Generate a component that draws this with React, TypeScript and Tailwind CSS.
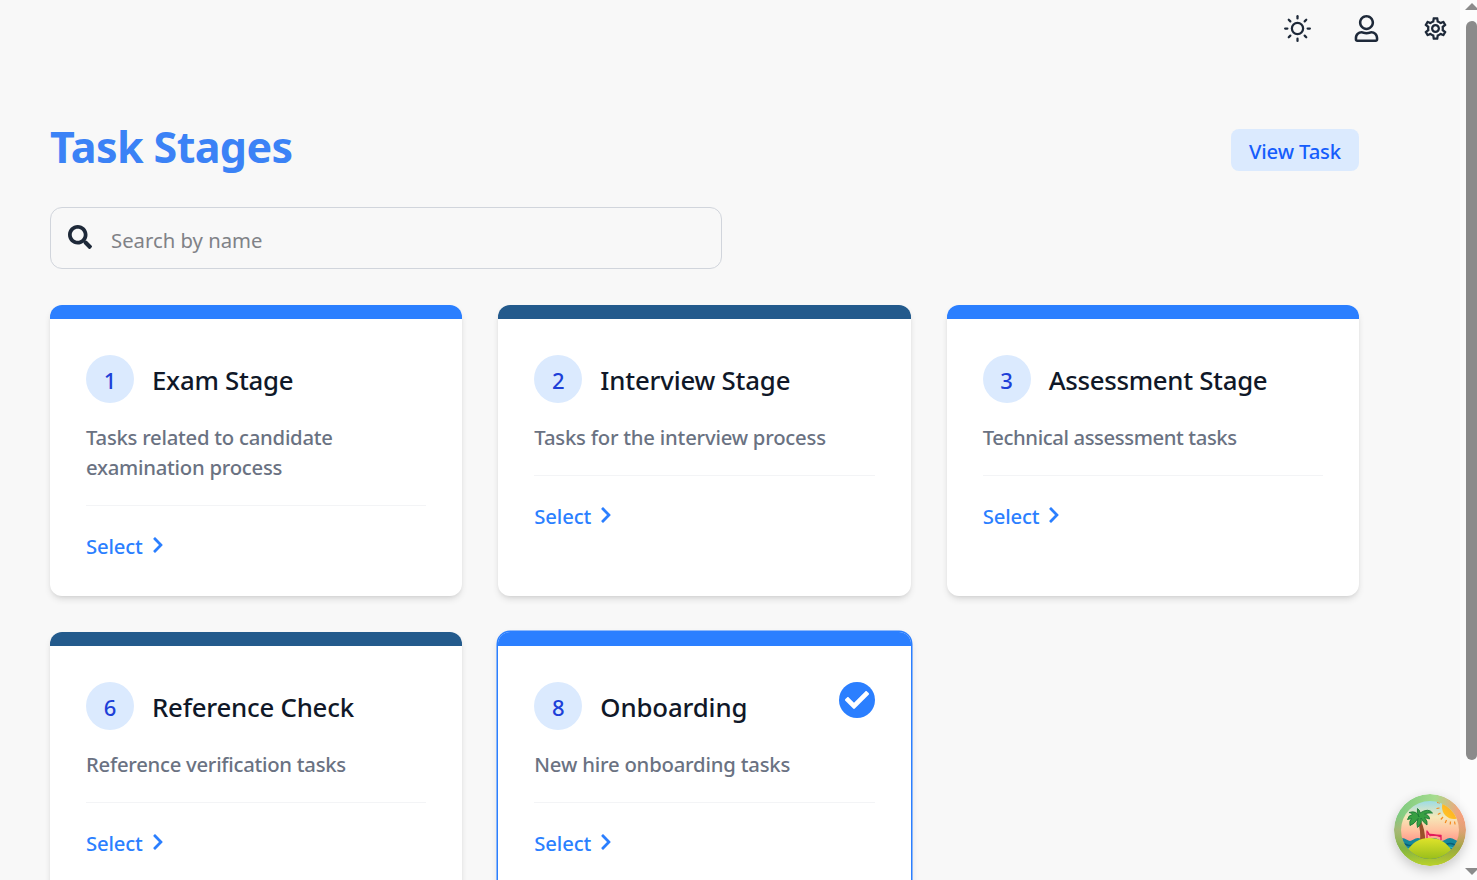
import React from "react";
import { FaRegUser, FaSearch, FaChevronRight, FaCheck } from "react-icons/fa";
import { FiSun } from "react-icons/fi";
import { MdOutlineSettings } from "react-icons/md";

type Stage = {
  id: number;
  title: string;
  titleClass: string;
  description: string;
  descClass: string;
  bar: string;
  selected?: boolean;
};

const stages: Stage[] = [
  { id: 1, title: "Exam Stage", titleClass: "tracking-[-0.25px]", description: "Tasks related to candidate examination process", descClass: "tracking-[-0.25px]", bar: "bg-[#2b7fff]" },
  { id: 2, title: "Interview Stage", titleClass: "tracking-[-0.2px]", description: "Tasks for the interview process", descClass: "tracking-[-0.22px]", bar: "bg-[#235a8c]" },
  { id: 3, title: "Assessment Stage", titleClass: "tracking-[-0.3px]", description: "Technical assessment tasks", descClass: "tracking-[-0.4px]", bar: "bg-[#2b7fff]" },
  { id: 6, title: "Reference Check", titleClass: "tracking-[-0.22px]", description: "Reference verification tasks", descClass: "tracking-[-0.27px]", bar: "bg-[#235a8c]" },
  { id: 8, title: "Onboarding", titleClass: "tracking-[-0.15px]", description: "New hire onboarding tasks", descClass: "tracking-[-0.2px]", bar: "bg-[#2b7fff]", selected: true },
];

function StageCard({ stage }: { stage: Stage }) {
  return (
    <article
      className={`h-[291px] overflow-hidden rounded-xl bg-white ${
        stage.selected
          ? "shadow-[0_0_0_1.5px_#2b7fff,0_4px_8px_rgba(0,0,0,0.12)]"
          : "shadow-[0_4px_7px_-1px_rgba(0,0,0,0.12),0_2px_4px_-2px_rgba(0,0,0,0.1)]"
      }`}
    >
      <div className={`h-3.5 ${stage.bar}`} />
      <div className="px-9 pt-9">
        <div className="flex items-start">
          <span className="flex size-12 shrink-0 items-center justify-center rounded-full bg-[#dbeafe] pt-0.5 text-[22px] font-medium text-[#1d40d8]">
            {stage.id}
          </span>
          <h2 className={`ml-[18px] flex-1 pt-[7px] text-[25.8px] leading-9 font-medium whitespace-nowrap text-[#101828] ${stage.titleClass}`}>
            {stage.title}
          </h2>
          {stage.selected && (
            <span className="flex size-9 items-center justify-center rounded-full bg-[#2b7fff] text-white">
              <FaCheck size={24} />
            </span>
          )}
        </div>
        <p className={`mt-[19px] w-[280px] text-[20.3px] leading-[30px] font-medium text-[#6a7282] ${stage.descClass} ${stage.id === 1 ? "" : "whitespace-nowrap"}`}>
          {stage.description}
        </p>
        <div className="mt-[23px] flex items-center border-t border-[#f3f4f6] pt-[25px] text-[#2b7fff]">
          <span className="text-[20.3px] leading-[30px] font-medium tracking-[-0.15px]">Select</span>
          <FaChevronRight size={18} className="-mt-0.5 ml-1.5" />
        </div>
      </div>
    </article>
  );
}

function PalmBadge() {
  return (
    <svg viewBox="0 0 72 72" className="size-[72px] rounded-full shadow-[0_4px_12px_rgba(0,0,0,0.2)]">
      <defs>
        <linearGradient id="ring" x1="0" y1="0.3" x2="1" y2="0.5">
          <stop offset="0" stopColor="#7cc87e" />
          <stop offset="0.5" stopColor="#a5dc8e" />
          <stop offset="0.85" stopColor="#f2a47c" />
          <stop offset="1" stopColor="#f79a7e" />
        </linearGradient>
        <linearGradient id="ringShade" x1="0" y1="0" x2="0" y2="1">
          <stop offset="0.3" stopColor="#cfa56f" stopOpacity="0" />
          <stop offset="0.5" stopColor="#c9a66a" stopOpacity="0.5" />
          <stop offset="0.75" stopColor="#7dab2c" stopOpacity="0.75" />
          <stop offset="1" stopColor="#bcd32b" />
        </linearGradient>
        <linearGradient id="sky" x1="0" y1="0" x2="0" y2="1">
          <stop offset="0.08" stopColor="#96dbe8" />
          <stop offset="0.32" stopColor="#f6e8b8" />
          <stop offset="0.5" stopColor="#ffc3a0" />
          <stop offset="0.7" stopColor="#ff8f86" />
        </linearGradient>
        <linearGradient id="hill" x1="0" y1="0" x2="0" y2="1">
          <stop offset="0" stopColor="#dfe32a" />
          <stop offset="1" stopColor="#94bc1a" />
        </linearGradient>
        <linearGradient id="sun" x1="0" y1="1" x2="1" y2="0">
          <stop offset="0" stopColor="#ffc928" />
          <stop offset="1" stopColor="#ff9417" />
        </linearGradient>
        <clipPath id="scene"><circle cx="36" cy="36" r="29" /></clipPath>
      </defs>
      <circle cx="36" cy="36" r="36" fill="url(#ring)" />
      <circle cx="36" cy="36" r="36" fill="url(#ringShade)" />
      <g clipPath="url(#scene)">
        <rect width="72" height="72" fill="url(#sky)" />
        <circle cx="60" cy="13" r="12" fill="url(#sun)" />
        <path d="M46 9l-3-.5M45.500 14l-3 .5M46.500 19l-2.700 1.500M49 23l-2.200 2.500M52.500 26l-1.300 3M56.500 27.500l-.3 3M60.500 27.500l.6 3" stroke="#f58a1d" strokeWidth="1.200" />
        <rect x="0" y="47" width="72" height="25" fill="#16889b" />
        <path d="M4 47q4-3 8 0t8 0 8 0 8 0 8 0 8 0 8 0 8 0" fill="none" stroke="#16889b" strokeWidth="3" />
        <path d="M4 50.500q4-2 8 0t8 0 8 0 8 0 8 0 8 0 8 0 8 0" fill="none" stroke="#075f78" strokeWidth="1.600" />
        <path d="M4 54q4-2 8 0t8 0 8 0 8 0 8 0 8 0 8 0 8 0" fill="none" stroke="#3cbcc4" strokeWidth="1" />
        <path d="M26 47q1-11-2.500-20l3-1q5 10 4.500 21z" fill="#98502a" />
        <path d="M33 36.500v8M33.500 37.500l2.500 4q6-1 11 1.500M34 40q4 1 13 1.500v4.500" stroke="#e31c5c" strokeWidth="1.300" fill="none" />
        <path d="M13 57Q21 44 35.500 44T58 57Q50 66.500 36 66.500T13 57z" fill="url(#hill)" />
        <path d="M25 23q-2-7-10-4.500 3 .5 3.500 2-4 .5-5 5l4-1q-2.500 2.500-1.500 7 4-1 8-7-2 5-.5 9 5-4 3.500-9.500 2.500 5 6 7 1-4-2.500-7.500l5 1.500q0-4-5-5 3-1.500 8-1-4-5.500-12.500 0 0-3-2.500-4.500-1 3 1.500 8.500z" fill="#379f42" stroke="#1d7a38" strokeWidth="0.900" />
      </g>
    </svg>
  );
}

export default function App() {
  return (
    <div className="relative flex h-[880px] w-[1477px] overflow-hidden bg-[#f8f8f8] font-['Noto_Sans','Open_Sans',sans-serif]">
      <main className="w-[1460px] shrink-0 px-[50px]">
        <nav className="-mr-[39px] flex h-14 items-center justify-end gap-[42px] text-[#1e2939]">
          <FiSun size={27} />
          <FaRegUser size={27} />
          <MdOutlineSettings size={27} />
        </nav>
        <header className="mt-[64px] flex h-[60px] w-[1309px] items-center justify-between">
          <h1 className="pb-2 text-[43px] leading-none font-bold tracking-[-0.6px] text-[#3b82f6]">Task Stages</h1>
          <button className="flex h-[42px] w-32 items-center justify-center rounded-lg bg-[#dbeafe] pt-0.5 text-[20.3px] font-medium tracking-[-0.15px] text-[#155dfc]">
            View Task
          </button>
        </header>
        <label className="mt-[27px] flex h-[62px] w-[672px] items-center rounded-xl border border-[#d1d5dc] pl-[17px] text-[#1e2939]">
          <FaSearch size={24} className="-mt-0.5" />
          <input
            placeholder="Search by name"
            className="ml-[19px] flex-1 bg-transparent pt-1 text-[20.3px] tracking-normal outline-none placeholder:text-[#808287]"
          />
        </label>
        <section className="mt-9 grid w-[1309px] grid-cols-3 gap-9">
          {stages.map((s) => (
            <StageCard key={s.id} stage={s} />
          ))}
        </section>
      </main>
      <aside className="flex h-full w-[17px] flex-col items-end bg-[#fcfcfc]">
        <svg viewBox="0 0 12 21" className="h-[21px] w-3">
          <path d="M0 10L7 3l7 7z" fill="#8b8b8b" />
        </svg>
        <div className="h-[739px] w-[11px] rounded-l-[6px] rounded-r-[5px] bg-[#8b8b8b]" />
        <svg viewBox="0 0 12 20" className="mt-auto h-5 w-3">
          <path d="M0 8h14l-7 7z" fill="#8b8b8b" />
        </svg>
      </aside>
      <div className="absolute top-[794px] left-[1394px]">
        <PalmBadge />
      </div>
    </div>
  );
}
